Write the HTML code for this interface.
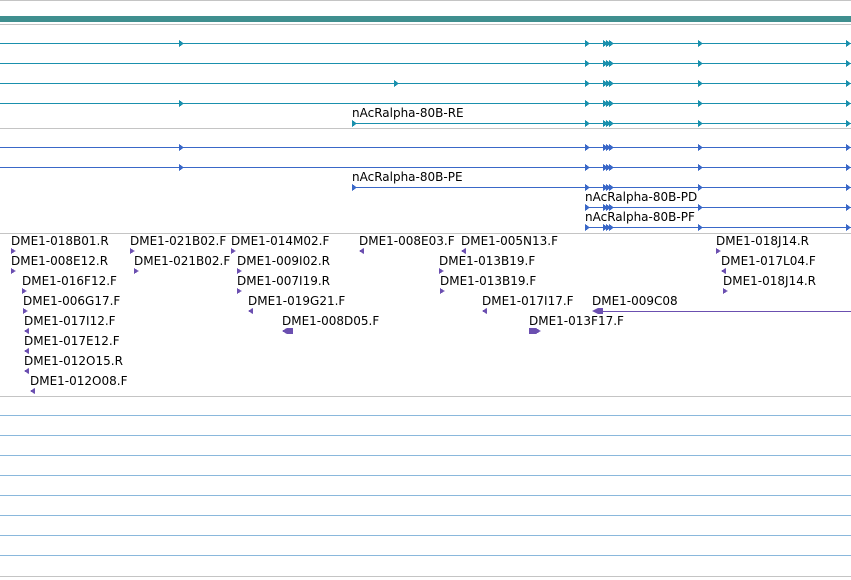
<!DOCTYPE html>
<html><head><meta charset="utf-8"><style>
html,body{margin:0;padding:0;background:#fff;width:851px;height:580px;overflow:hidden}
svg{display:block}
text{font-family:"DejaVu Sans","Liberation Sans",sans-serif;font-size:12px;fill:#000}
</style></head><body>
<svg width="851" height="580" xmlns="http://www.w3.org/2000/svg" shape-rendering="crispEdges">
<defs>
<polygon id="ra" points="0,-3 5,0.5 0,4"/>
</defs>
<rect x="0" y="0" width="851" height="1" fill="#c4c4c4"/>
<rect x="0" y="16" width="851" height="6" fill="#3f8f8f"/>
<rect x="0" y="24" width="851" height="1" fill="#c4c4c4"/>
<rect x="0" y="128" width="851" height="1" fill="#c4c4c4"/>
<rect x="0" y="233" width="851" height="1" fill="#c4c4c4"/>
<rect x="0" y="396" width="851" height="1" fill="#c4c4c4"/>
<g fill="#8ab8dc">
<rect x="0" y="415" width="851" height="1"/><rect x="0" y="435" width="851" height="1"/>
<rect x="0" y="455" width="851" height="1"/><rect x="0" y="475" width="851" height="1"/>
<rect x="0" y="495" width="851" height="1"/><rect x="0" y="515" width="851" height="1"/>
<rect x="0" y="535" width="851" height="1"/><rect x="0" y="555" width="851" height="1"/>
</g>
<rect x="0" y="576" width="851" height="1" fill="#c4c4c4"/>

<g fill="#1a90ad">
<rect x="0" y="43" width="851" height="1"/>
<use href="#ra" x="179" y="43"/><use href="#ra" x="585" y="43"/><use href="#ra" x="603" y="43"/><use href="#ra" x="606" y="43"/><use href="#ra" x="609" y="43"/><use href="#ra" x="698" y="43"/><use href="#ra" x="846" y="43"/>
<rect x="0" y="63" width="851" height="1"/>
<use href="#ra" x="585" y="63"/><use href="#ra" x="603" y="63"/><use href="#ra" x="606" y="63"/><use href="#ra" x="609" y="63"/><use href="#ra" x="698" y="63"/><use href="#ra" x="846" y="63"/>
<rect x="0" y="83" width="851" height="1"/>
<use href="#ra" x="394" y="83"/><use href="#ra" x="585" y="83"/><use href="#ra" x="603" y="83"/><use href="#ra" x="606" y="83"/><use href="#ra" x="609" y="83"/><use href="#ra" x="698" y="83"/><use href="#ra" x="846" y="83"/>
<rect x="0" y="103" width="851" height="1"/>
<use href="#ra" x="179" y="103"/><use href="#ra" x="585" y="103"/><use href="#ra" x="603" y="103"/><use href="#ra" x="606" y="103"/><use href="#ra" x="609" y="103"/><use href="#ra" x="698" y="103"/><use href="#ra" x="846" y="103"/>
<rect x="352" y="123" width="499" height="1"/>
<use href="#ra" x="352" y="123"/><use href="#ra" x="585" y="123"/><use href="#ra" x="603" y="123"/><use href="#ra" x="606" y="123"/><use href="#ra" x="609" y="123"/><use href="#ra" x="698" y="123"/><use href="#ra" x="846" y="123"/>
</g>
<text x="352" y="117">nAcRalpha-80B-RE</text>

<g fill="#3a68c8">
<rect x="0" y="147" width="851" height="1"/>
<use href="#ra" x="179" y="147"/><use href="#ra" x="585" y="147"/><use href="#ra" x="603" y="147"/><use href="#ra" x="606" y="147"/><use href="#ra" x="609" y="147"/><use href="#ra" x="698" y="147"/><use href="#ra" x="846" y="147"/>
<rect x="0" y="167" width="851" height="1"/>
<use href="#ra" x="179" y="167"/><use href="#ra" x="585" y="167"/><use href="#ra" x="603" y="167"/><use href="#ra" x="606" y="167"/><use href="#ra" x="609" y="167"/><use href="#ra" x="698" y="167"/><use href="#ra" x="846" y="167"/>
<rect x="352" y="187" width="499" height="1"/>
<use href="#ra" x="352" y="187"/><use href="#ra" x="585" y="187"/><use href="#ra" x="603" y="187"/><use href="#ra" x="606" y="187"/><use href="#ra" x="609" y="187"/><use href="#ra" x="698" y="187"/><use href="#ra" x="846" y="187"/>
<rect x="585" y="207" width="266" height="1"/>
<use href="#ra" x="585" y="207"/><use href="#ra" x="603" y="207"/><use href="#ra" x="606" y="207"/><use href="#ra" x="609" y="207"/><use href="#ra" x="698" y="207"/><use href="#ra" x="846" y="207"/>
<rect x="585" y="227" width="266" height="1"/>
<use href="#ra" x="585" y="227"/><use href="#ra" x="603" y="227"/><use href="#ra" x="606" y="227"/><use href="#ra" x="609" y="227"/><use href="#ra" x="698" y="227"/><use href="#ra" x="846" y="227"/>
</g>
<text x="352" y="181">nAcRalpha-80B-PE</text>
<text x="585" y="201">nAcRalpha-80B-PD</text>
<text x="585" y="221">nAcRalpha-80B-PF</text>

<g>
<text x="11" y="245">DME1-018B01.R</text>
<text x="130" y="245">DME1-021B02.F</text>
<text x="231" y="245">DME1-014M02.F</text>
<text x="359" y="245">DME1-008E03.F</text>
<text x="461" y="245">DME1-005N13.F</text>
<text x="716" y="245">DME1-018J14.R</text>
<text x="11" y="265">DME1-008E12.R</text>
<text x="134" y="265">DME1-021B02.F</text>
<text x="237" y="265">DME1-009I02.R</text>
<text x="439" y="265">DME1-013B19.F</text>
<text x="721" y="265">DME1-017L04.F</text>
<text x="22" y="285">DME1-016F12.F</text>
<text x="237" y="285">DME1-007I19.R</text>
<text x="440" y="285">DME1-013B19.F</text>
<text x="723" y="285">DME1-018J14.R</text>
<text x="23" y="305">DME1-006G17.F</text>
<text x="248" y="305">DME1-019G21.F</text>
<text x="482" y="305">DME1-017I17.F</text>
<text x="592" y="305">DME1-009C08</text>
<text x="24" y="325">DME1-017I12.F</text>
<text x="282" y="325">DME1-008D05.F</text>
<text x="529" y="325">DME1-013F17.F</text>
<text x="24" y="345">DME1-017E12.F</text>
<text x="24" y="365">DME1-012O15.R</text>
<text x="30" y="385">DME1-012O08.F</text>
</g>
<g fill="#6b4fb0">
<polygon points="11,248 16,251 11,254"/>
<polygon points="130,248 135,251 130,254"/>
<polygon points="231,248 236,251 231,254"/>
<polygon points="716,248 721,251 716,254"/>
<polygon points="11,268 16,271 11,274"/>
<polygon points="134,268 139,271 134,274"/>
<polygon points="237,268 242,271 237,274"/>
<polygon points="439,268 444,271 439,274"/>
<polygon points="22,288 27,291 22,294"/>
<polygon points="237,288 242,291 237,294"/>
<polygon points="440,288 445,291 440,294"/>
<polygon points="723,288 728,291 723,294"/>
<polygon points="23,308 28,311 23,314"/>
<polygon points="529,328 536,328 541,331 536,334 529,334"/>
<polygon points="364,248 359,251 364,254"/>
<polygon points="466,248 461,251 466,254"/>
<polygon points="726,268 721,271 726,274"/>
<polygon points="253,308 248,311 253,314"/>
<polygon points="487,308 482,311 487,314"/>
<polygon points="29,328 24,331 29,334"/>
<polygon points="293,328 287,328 282,331 287,334 293,334"/>
<polygon points="29,348 24,351 29,354"/>
<polygon points="29,368 24,371 29,374"/>
<polygon points="35,388 30,391 35,394"/>
<polygon points="603,308 598,308 592,311 598,314 603,314"/>
<rect x="600" y="311" width="251" height="1"/>
</g>
</svg>
</body></html>
